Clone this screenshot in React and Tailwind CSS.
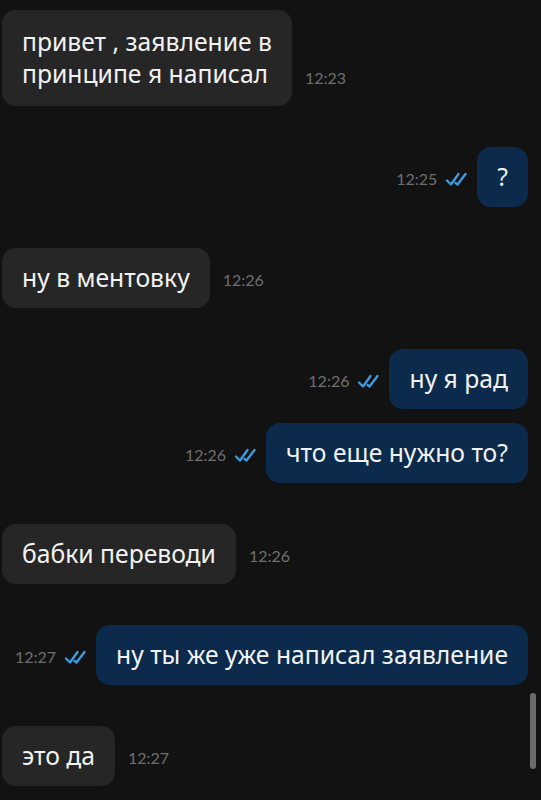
import React from 'react';

const messages = [
    { out: false, text: 'привет , заявление в принципе я написал', time: '12:23', wrap: true },
    { out: true, text: '?', time: '12:25' },
    { out: false, text: 'ну в ментовку', time: '12:26' },
    { out: true, text: 'ну я рад', time: '12:26' },
    { out: true, text: 'что еще нужно то?', time: '12:26', grouped: true },
    { out: false, text: 'бабки переводи', time: '12:26' },
    { out: true, text: 'ну ты же уже написал заявление', time: '12:27' },
    { out: false, text: 'это да', time: '12:27' },
];

function DoubleCheck() {
    return (
        <svg width="25" height="16" viewBox="0 0 25 16" fill="none" stroke="#3b9de3" strokeWidth="2.3" strokeLinecap="round" strokeLinejoin="round">
            <path d="M2 9.5 L6 13.5 L13.5 3" />
            <path d="M10.5 12 L12.5 13.5 L20.5 3" />
        </svg>
    );
}

function Time({ value }) {
    return (
        <span className="text-[16px] leading-[18px] text-[#6f6f6f]" style={{ fontFamily: 'Lato, "Liberation Sans", sans-serif' }}>
            {value}
        </span>
    );
}

export default function App() {
    return (
        <div
            className="relative h-[800px] w-[541px] overflow-hidden bg-[#121212] pt-[10px]"
            style={{ fontFamily: '"Noto Sans", "Open Sans", sans-serif' }}
        >
            <div className="flex flex-col">
                {messages.map((m, i) => (
                    <div
                        key={i}
                        className={`flex items-end ${i === 0 ? '' : m.grouped ? 'mt-[14px]' : 'mt-[41px]'} ${m.out ? 'justify-end pr-[13px]' : 'pl-[2px]'}`}
                    >
                        {m.out ? (
                            <>
                                <div className="mb-[19px] mr-[7px] flex items-center gap-[8px]">
                                    <Time value={m.time} />
                                    <DoubleCheck />
                                </div>
                                <div className="rounded-[14px] bg-[#0b2a4c] px-[20px] py-[14px] text-[24.7px] leading-[32px] text-[#f2f2f2]">
                                    {m.text}
                                </div>
                            </>
                        ) : (
                            <>
                                <div className={`rounded-[14px] bg-[#262626] px-[20px] text-[24.7px] leading-[32px] text-[#f2f2f2] ${m.wrap ? 'w-[290px] py-[16px]' : 'py-[14px]'}`}>
                                    {m.text}
                                </div>
                                <div className="mb-[16px] ml-[13px]">
                                    <Time value={m.time} />
                                </div>
                            </>
                        )}
                    </div>
                ))}
            </div>
            {/* scrollbar */}
            <div className="absolute left-[530px] top-[693px] h-[76px] w-[6px] rounded-full bg-[#6b6b6b]" />
        </div>
    );
}
